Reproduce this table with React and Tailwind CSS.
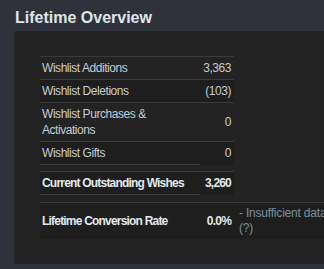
const rows = [
  { label: "Wishlist Additions", value: "3,363", dark: false },
  { label: "Wishlist Deletions", value: "(103)", dark: true },
  { label: "Wishlist Purchases & Activations", value: "0", dark: false, tall: true },
];

function StatRow({ label, value, dark, tall }) {
  return (
    <div
      className={`flex items-center border-t border-[#3a3a3a] ${tall ? "h-[39px]" : "h-[23px]"} ${
        dark ? "bg-[#1e1e1e]" : ""
      }`}
    >
      <div className="w-[160px] pl-[2px] leading-[16px]">{label}</div>
      <div className="flex-1 pr-[3px] text-right">{value}</div>
    </div>
  );
}

// row whose underline only runs beneath the label column
function SummaryRow({ label, value, bold }) {
  const strong = bold ? "font-bold tracking-[-0.8px] text-[#e3e7ea]" : "";
  return (
    <div className="border-t border-[#3a3a3a] bg-[#1e1e1e]">
      <div className="flex h-[22px] items-center">
        <div className={`w-[160px] whitespace-nowrap pl-[2px] ${strong}`}>{label}</div>
        <div className={`flex-1 pr-[3px] text-right ${strong}`}>{value}</div>
      </div>
      <div className="h-px w-[160px] bg-[#3a3a3a]" />
    </div>
  );
}

export default function App() {
  return (
    <div
      className="h-[269px] w-[324px] overflow-hidden bg-[#2f323a] text-[12px] tracking-[-0.45px] text-[#c6ccd2]"
      style={{ fontFamily: '"Liberation Sans", Arial, sans-serif' }}
    >
      <h2 className="h-[31px] pl-[15px] pt-[8px] text-[16px] font-bold leading-[20px] tracking-normal text-[#dfe5ea]">
        Lifetime Overview
      </h2>
      <div className="ml-[14px] h-[233px] rounded-tl-[2px] bg-[#232323] pl-[26px] pt-[25px]">
        <div className="w-[194px]">
          {rows.map((r) => (
            <StatRow key={r.label} {...r} />
          ))}
          <SummaryRow label="Wishlist Gifts" value="0" />
          <div className="h-[6px]" />
          <SummaryRow label="Current Outstanding Wishes" value="3,260" bold />
          <div className="h-[7px]" />
        </div>
        <div className="flex h-[37px] items-center border-t border-[#3a3a3a] bg-[#1e1e1e] font-bold tracking-[-0.8px] text-[#e3e7ea]">
          <div className="w-[160px] shrink-0 pl-[2px]">Lifetime Conversion Rate</div>
          <div className="w-[34px] shrink-0 pr-[3px] text-right">0.0%</div>
          <div className="shrink-0 pl-[5px] text-[12px] font-normal leading-[15px] tracking-[-0.2px] text-[#7d8e9c]">
            <div className="whitespace-nowrap">- Insufficient data points</div>
            <div>(?)</div>
          </div>
        </div>
      </div>
    </div>
  );
}
